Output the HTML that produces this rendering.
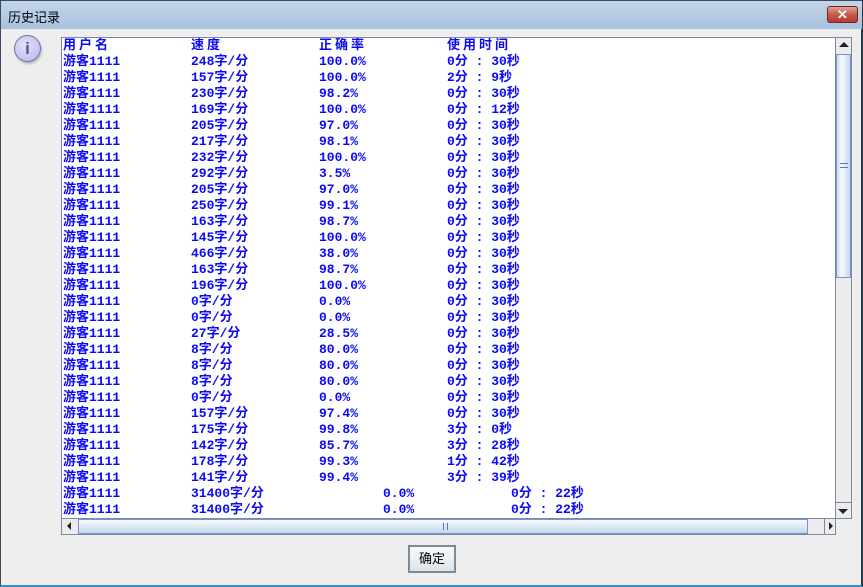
<!DOCTYPE html>
<html><head><meta charset="utf-8"><style>
*{margin:0;padding:0;box-sizing:border-box}
body{width:863px;height:587px;overflow:hidden;background:#eeeeee;font-family:"Liberation Sans","Noto Sans CJK SC",sans-serif;position:relative}
.win{position:absolute;left:0;top:0;width:863px;height:587px;border:1px solid #3a4a5a;border-right:2px solid #2a3a4a;border-bottom:2px solid #3a8ec0;background:#eeeeee}
.title{position:absolute;left:0;top:0;width:861px;height:28px;background:linear-gradient(#c3d5ea,#a9c2df);}
.title span{position:absolute;left:7px;top:6px;font-size:13px;color:#000}
.close{position:absolute;left:826px;top:5px;width:31px;height:17px;border:1px solid #6b2a26;border-radius:3px;background:linear-gradient(#e4a293,#c8584a 50%,#b63c2e);color:#fff;font-weight:bold;font-size:13px;text-align:center;line-height:15px}
.icon{position:absolute;left:13px;top:34px;width:27px;height:27px;border-radius:50%;background:radial-gradient(circle at 40% 35%,#e2e2fa,#b5b5ee);border:1px solid #6e6ea8;box-shadow:1px 2px 2px #bbb;color:#55558a;font-weight:bold;font-size:17px;text-align:center;line-height:25px;font-family:"Liberation Sans",sans-serif}
.area{position:absolute;left:60px;top:36px;width:775px;height:482px;background:#fff;border:1px solid #7a8aa0;border-right:none;overflow:hidden}
.row{position:absolute;left:0;height:16px;font-size:13px;font-weight:bold;color:#0a0af5;white-space:nowrap;line-height:16px;font-family:"Liberation Mono","Noto Sans CJK SC",monospace}
.row span{position:absolute;top:0}
.h span{letter-spacing:3px}
.vs{position:absolute;left:834px;top:36px;width:17px;height:482px;background:#ececec;border:1px solid #7a8aa0}
.vthumb{position:absolute;left:0;top:16px;width:15px;height:224px;background:linear-gradient(90deg,#c8d8ee,#f8fbff 35%,#c4d5ec);border:1px solid #7a96c8}
.hs{position:absolute;left:60px;top:517px;width:775px;height:17px;background:#ececec;border:1px solid #7a8aa0}
.hthumb{position:absolute;left:16px;top:0;width:730px;height:15px;background:linear-gradient(#f8fbff,#c6d6ec);border:1px solid #7a96c8}
.btn{position:absolute;left:407px;top:544px;width:48px;height:28px;border:2px solid #7d8a98;background:linear-gradient(#fafafa,#dde3ea);font-size:13px;text-align:center;line-height:24px}
</style></head><body>
<div class="win">
<div class="title"><span>历史记录</span><div class="close">✕</div></div>
<div class="icon">i</div>
<div class="area" id="a"></div>
<div class="vs"><div style="position:absolute;left:3px;top:4px;border-left:5px solid transparent;border-right:5px solid transparent;border-bottom:5px solid #222"></div><div class="vthumb"><div style="position:absolute;left:3px;top:108px;width:8px;height:5px;border-top:1px solid #5a78c0;border-bottom:1px solid #5a78c0"></div></div><div style="position:absolute;left:0;top:464px;width:15px;height:16px;border-top:1px solid #7a8aa0"><div style="position:absolute;left:2px;top:6px;border-left:5px solid transparent;border-right:5px solid transparent;border-top:5px solid #222"></div></div></div>
<div class="hs"><div style="position:absolute;left:5px;top:3px;border-top:4px solid transparent;border-bottom:4px solid transparent;border-right:4px solid #222"></div><div class="hthumb"><div style="position:absolute;left:364px;top:3px;width:5px;height:7px;border-left:1px solid #5a78c0;border-right:1px solid #5a78c0"></div></div><div style="position:absolute;left:762px;top:0;width:12px;height:15px;border-left:1px solid #7a8aa0"><div style="position:absolute;left:4px;top:3px;border-top:4px solid transparent;border-bottom:4px solid transparent;border-left:4px solid #222"></div></div></div>
<div class="btn">确定</div>
</div>
<script>
var d=[["用户名","速度","正确率","使用时间"],
["248字/分","100.0%","0分 : 30秒"],["157字/分","100.0%","2分 : 9秒"],["230字/分","98.2%","0分 : 30秒"],["169字/分","100.0%","0分 : 12秒"],["205字/分","97.0%","0分 : 30秒"],["217字/分","98.1%","0分 : 30秒"],["232字/分","100.0%","0分 : 30秒"],["292字/分","3.5%","0分 : 30秒"],["205字/分","97.0%","0分 : 30秒"],["250字/分","99.1%","0分 : 30秒"],["163字/分","98.7%","0分 : 30秒"],["145字/分","100.0%","0分 : 30秒"],["466字/分","38.0%","0分 : 30秒"],["163字/分","98.7%","0分 : 30秒"],["196字/分","100.0%","0分 : 30秒"],["0字/分","0.0%","0分 : 30秒"],["0字/分","0.0%","0分 : 30秒"],["27字/分","28.5%","0分 : 30秒"],["8字/分","80.0%","0分 : 30秒"],["8字/分","80.0%","0分 : 30秒"],["8字/分","80.0%","0分 : 30秒"],["0字/分","0.0%","0分 : 30秒"],["157字/分","97.4%","0分 : 30秒"],["175字/分","99.8%","3分 : 0秒"],["142字/分","85.7%","3分 : 28秒"],["178字/分","99.3%","1分 : 42秒"],["141字/分","99.4%","3分 : 39秒"],["31400字/分","0.0%","0分 : 22秒",1],["31400字/分","0.0%","0分 : 22秒",1]];
var h="";
d.forEach(function(r,i){var y=i*16;var c=r.length==4&&i==0?r:["游客1111",r[0],r[1],r[2]];
var x=r[3]===1?[1,129,321,449]:[1,129,257,385];
h+='<div class="row'+(i==0?' h':'')+'" style="top:'+y+'px">';
for(var k=0;k<4;k++)h+='<span style="left:'+x[k]+'px">'+c[k]+'</span>';
h+='</div>';});
document.getElementById("a").innerHTML=h;
</script>
</body></html>
